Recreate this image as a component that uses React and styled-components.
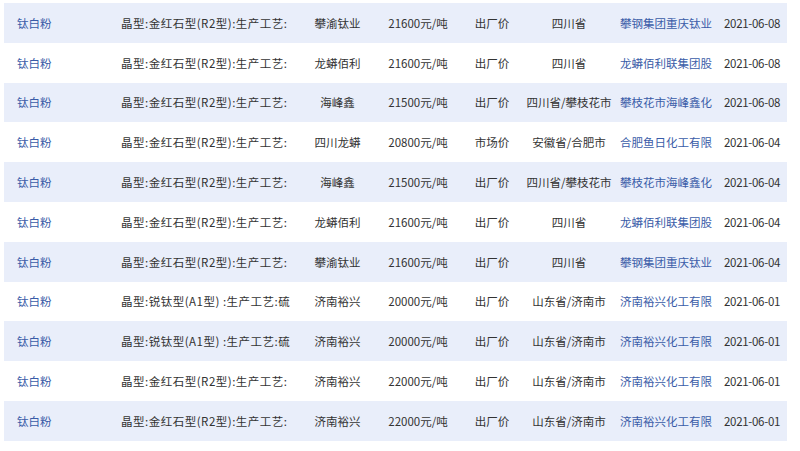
import styled, { createGlobalStyle } from 'styled-components'

const GlobalStyle = createGlobalStyle`
  html, body {
    margin: 0;
    padding: 0;
    background: #fff;
  }
  body {
    font-family: "Noto Sans CJK SC", "Noto Sans", sans-serif;
    font-size: 11.5px;
    color: #333;
  }
`

const List = styled.div`
  padding: 3px 13px 0 4px;
`

const Row = styled.div`
  display: grid;
  grid-template-columns: 117px 184px 65px 96px 52px 102px 96px 76px;
  align-items: center;
  height: 39.8px;
  background: ${(props) => (props.striped ? '#e9eefa' : '#fff')};
  white-space: nowrap;
`

const Cell = styled.div`
  text-align: ${(props) => props.align || 'left'};
  padding-left: ${(props) => props.pad || 0}px;
  letter-spacing: ${(props) => props.spacing || 0}px;
`

const Link = styled(Cell)`
  color: #3a5ca8;
`

const spec1 = '晶型:金红石型(R2型):生产工艺:'
const spec2 = '晶型:锐钛型(A1型) :生产工艺:硫'

const rows = [
  [spec1, '攀渝钛业', '21600元/吨', '出厂价', '四川省', '攀钢集团重庆钛业', '2021-06-08'],
  [spec1, '龙蟒佰利', '21600元/吨', '出厂价', '四川省', '龙蟒佰利联集团股', '2021-06-08'],
  [spec1, '海峰鑫', '21500元/吨', '出厂价', '四川省/攀枝花市', '攀枝花市海峰鑫化', '2021-06-08'],
  [spec1, '四川龙蟒', '20800元/吨', '市场价', '安徽省/合肥市', '合肥鱼日化工有限', '2021-06-04'],
  [spec1, '海峰鑫', '21500元/吨', '出厂价', '四川省/攀枝花市', '攀枝花市海峰鑫化', '2021-06-04'],
  [spec1, '龙蟒佰利', '21600元/吨', '出厂价', '四川省', '龙蟒佰利联集团股', '2021-06-04'],
  [spec1, '攀渝钛业', '21600元/吨', '出厂价', '四川省', '攀钢集团重庆钛业', '2021-06-04'],
  [spec2, '济南裕兴', '20000元/吨', '出厂价', '山东省/济南市', '济南裕兴化工有限', '2021-06-01'],
  [spec2, '济南裕兴', '20000元/吨', '出厂价', '山东省/济南市', '济南裕兴化工有限', '2021-06-01'],
  [spec1, '济南裕兴', '22000元/吨', '出厂价', '山东省/济南市', '济南裕兴化工有限', '2021-06-01'],
  [spec1, '济南裕兴', '22000元/吨', '出厂价', '山东省/济南市', '济南裕兴化工有限', '2021-06-01'],
]

export default function App() {
  return (
    <>
      <GlobalStyle />
      <List>
        {rows.map(([spec, maker, price, kind, region, company, date], index) => (
          <Row key={index} striped={index % 2 === 0}>
            <Link pad={13}>钛白粉</Link>
            <Cell spacing={0.5}>{spec}</Cell>
            <Cell align='center'>{maker}</Cell>
            <Cell align='center'>{price}</Cell>
            <Cell align='center'>{kind}</Cell>
            <Cell align='center'>{region}</Cell>
            <Link>{company}</Link>
            <Cell pad={8} spacing={-0.3}>{date}</Cell>
          </Row>
        ))}
      </List>
    </>
  )
}
